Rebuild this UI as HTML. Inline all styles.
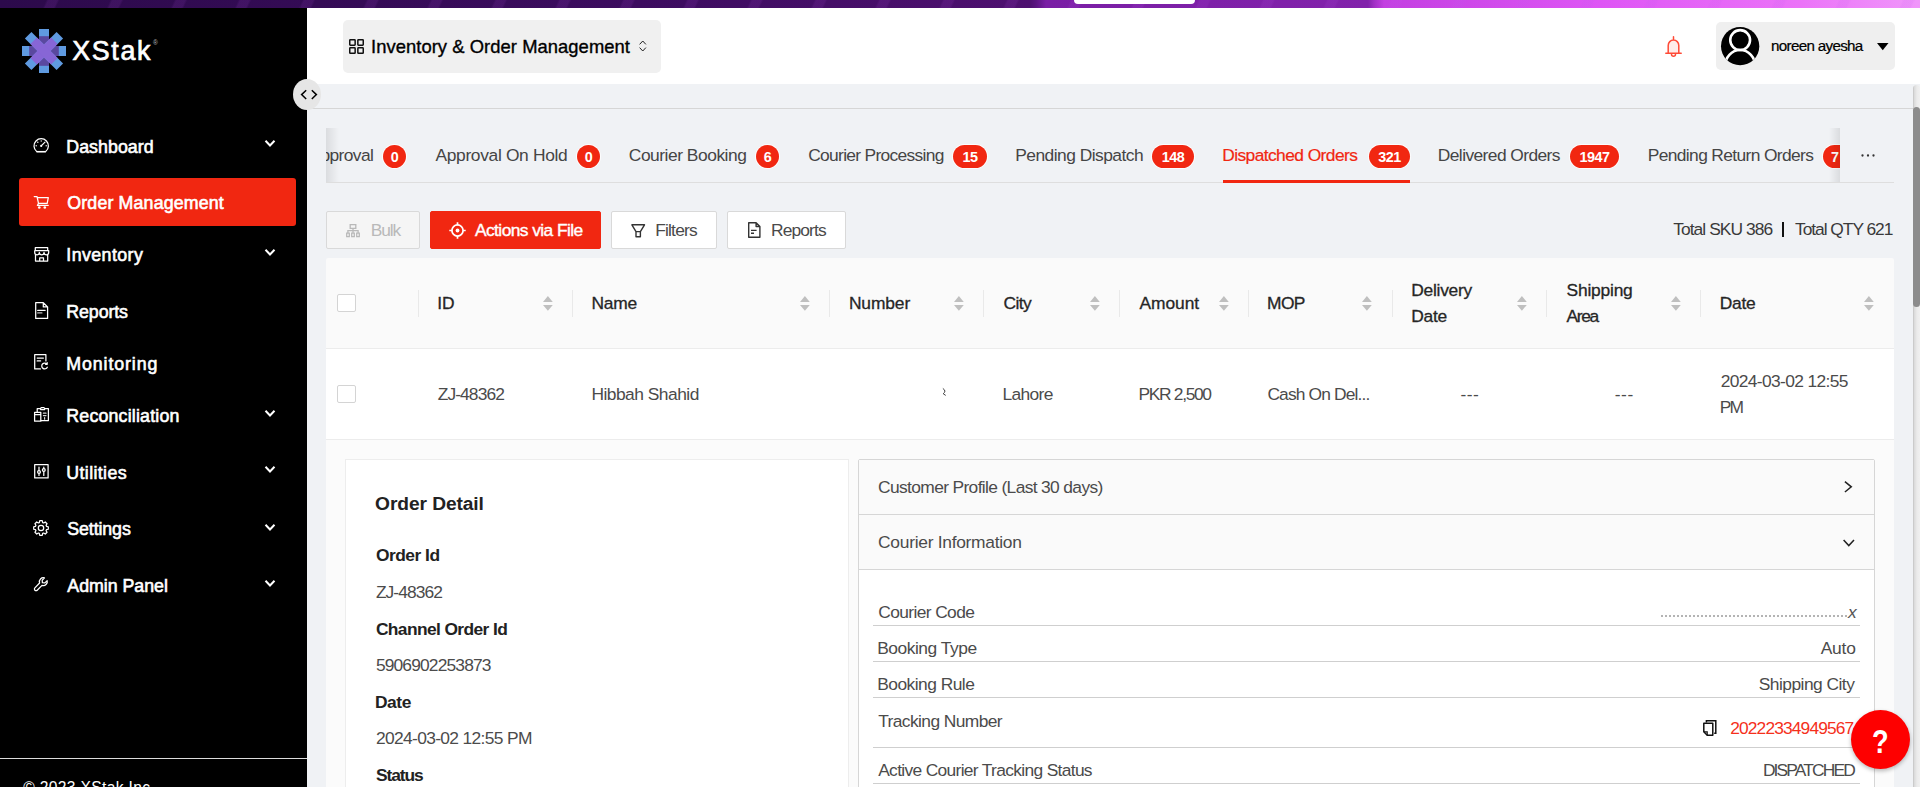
<!DOCTYPE html>
<html lang="en"><head><meta charset="utf-8"><title>XStak OMS - Dispatched Orders</title>
<style>
*{box-sizing:border-box;margin:0;padding:0}
html,body{width:1920px;height:787px;overflow:hidden;background:#f0f2f5;font-family:"Liberation Sans",sans-serif;color:#333}
body{position:relative}
.a,.t,svg.i{position:absolute}
.t{white-space:nowrap;line-height:20px;font-size:17.6px;z-index:2}
svg.i{overflow:visible;z-index:3}
#topband{left:0;top:0;width:1920px;height:8px;background:repeating-linear-gradient(115deg,rgba(190,90,235,0) 0 42px,rgba(190,90,235,.11) 44px 52px,rgba(190,90,235,0) 54px 58px),linear-gradient(90deg,#2c0a4b 0,#3c0c5f 640px,#4e1070 1030px,#5a1480 1036px,#7a1ea5 1046px,#8222ab 1368px,#a030c4 1374px,#c33fe1 1384px,#de55f5 1600px,#eb73f8 1800px,#f096fa 1920px)}
#pill{left:1074px;top:0;width:121px;height:4px;background:#fff;border-radius:0 0 8px 8px}
#side{left:0;top:8px;width:307px;height:779px;background:#000}
#sfoot{left:0;top:758px;width:307px;height:1px;background:#dcdcdc}
#active{left:19px;top:178px;width:277px;height:48px;background:#f12711;border-radius:3px}
#head{left:307px;top:8px;width:1613px;height:76px;background:#fff}
#modsel{left:343px;top:20px;width:318px;height:53px;background:#f0f0f0;border-radius:5px}
#userbox{left:1716px;top:22px;width:179px;height:48px;background:#efefef;border-radius:5px}
#toggle{left:293px;top:79px;width:28px;height:31px;border-radius:50%;background:#e6e6e6;z-index:4}
#hline{left:307px;top:108px;width:1606px;height:1px;background:#d6d6d6}
#sbtrack{left:1913px;top:85px;width:7px;height:702px;background:linear-gradient(90deg,#c2c2c2 0,#dcdcdc 1.5px,#ebebeb 4px,#f0f0f0 7px);border-radius:5px 5px 0 0;z-index:6}
#sbthumb{left:1913px;top:107px;width:7px;height:200px;background:#8c8c8c;border-radius:4px;z-index:7}
#tabline{left:326px;top:182px;width:1568px;height:1px;background:#dedede}
#tabink{left:1223px;top:180px;width:187px;height:3px;background:#f12711}
.maskL{left:307px;top:128px;width:19px;height:52px;background:#f0f2f5;z-index:5}
.maskR{left:1840px;top:128px;width:73px;height:52px;background:#f0f2f5;z-index:5}
.shL{left:326px;top:128px;width:13px;height:54px;background:linear-gradient(90deg,rgba(0,0,0,.09),rgba(0,0,0,0));z-index:5}
.shR{left:1829px;top:128px;width:11px;height:54px;background:linear-gradient(270deg,rgba(0,0,0,.09),rgba(0,0,0,0));z-index:5}
.badge{position:absolute;top:145px;height:23px;border-radius:12px;background:#f12711;box-shadow:0 0 0 1px rgba(255,255,255,.85);color:#fff;font-weight:700;font-size:14.4px;line-height:24.6px;text-align:center;z-index:2;letter-spacing:-.45px}
.btn{position:absolute;top:211px;height:38px;border:1px solid #d9d9d9;border-radius:2px;background:#fff}
#bBulk{left:326px;width:94px;background:#f5f5f5}
#bAct{left:430px;width:171px;background:#f12711;border-color:#f12711}
#bFil{left:611px;width:106px}
#bRep{left:727px;width:119px}
#bar{left:1781.6px;top:222px;width:2.6px;height:14.5px;background:#111}
#thead{left:326px;top:258px;width:1568px;height:90px;background:#fafafa;border-radius:2px 2px 0 0}
#thline{left:326px;top:348px;width:1568px;height:1px;background:#ececec}
#trow{left:326px;top:349px;width:1568px;height:90px;background:#fff}
#trline{left:326px;top:439px;width:1568px;height:1px;background:#ececec}
#texp{left:326px;top:440px;width:1568px;height:347px;background:#fbfbfb}
.sep{position:absolute;top:290px;width:1px;height:27px;background:#e9e9e9}
.cb{position:absolute;left:337px;width:19px;height:18px;border:1px solid #d4d4d4;border-radius:2px;background:#fff}
#card{left:345px;top:459px;width:504px;height:340px;background:#fff;border:1px solid #ededed}
#coll{left:858px;top:459px;width:1017px;height:340px;background:#fff;border:1px solid #d6d6d6;border-radius:2px}
#ch1{left:859px;top:460px;width:1015px;height:54px;background:#fafafa}
#cl1{left:859px;top:514px;width:1015px;height:1px;background:#d6d6d6}
#ch2{left:859px;top:515px;width:1015px;height:54px;background:#fafafa}
#cl2{left:859px;top:569px;width:1015px;height:1px;background:#d6d6d6}
.rl{position:absolute;left:873px;width:987px;height:1px;background:#cfcfcf}
#help{left:1851px;top:710px;width:59px;height:59px;border-radius:50%;background:#fe0000;box-shadow:0 2px 4px rgba(0,0,0,.28);z-index:8;color:#fff;font-weight:700;font-size:34px;line-height:62px;text-align:center}#help span{display:inline-block;transform:scaleX(.8)}
#redact{left:1661px;top:613px;width:186px;height:4px;border-bottom:2px dotted #b4b4b4;z-index:2}
</style></head><body>
<div class="a" id="topband"></div><div class="a" id="pill"></div>
<div class="a" id="side"></div><div class="a" id="sfoot"></div><div class="a" id="active"></div>
<div class="a" id="head"></div><div class="a" id="modsel"></div><div class="a" id="userbox"></div>
<div class="a" id="toggle"></div><div class="a" id="hline"></div>
<div class="a" id="sbtrack"></div><div class="a" id="sbthumb"></div>
<div class="a" id="tabline"></div><div class="a" id="tabink"></div>
<div class="a maskL"></div><div class="a maskR"></div><div class="a shL"></div><div class="a shR"></div>
<div class="badge" style="left:383px;width:23px">0</div>
<div class="badge" style="left:577px;width:23px">0</div>
<div class="badge" style="left:756px;width:23px">6</div>
<div class="badge" style="left:953px;width:34px">15</div>
<div class="badge" style="left:1152px;width:42px">148</div>
<div class="badge" style="left:1369px;width:41px">321</div>
<div class="badge" style="left:1570px;width:49px">1947</div>
<div class="badge" style="left:1823px;width:34px;text-align:left;padding-left:8px">7</div>
<div class="btn" id="bBulk"></div><div class="btn" id="bAct"></div><div class="btn" id="bFil"></div><div class="btn" id="bRep"></div>
<div class="a" id="bar"></div>
<div class="a" id="thead"></div><div class="a" id="thline"></div><div class="a" id="trow"></div><div class="a" id="trline"></div><div class="a" id="texp"></div>
<div class="sep" style="left:418px"></div><div class="sep" style="left:572px"></div><div class="sep" style="left:829px"></div>
<div class="sep" style="left:983px"></div><div class="sep" style="left:1119px"></div><div class="sep" style="left:1248px"></div>
<div class="sep" style="left:1392px"></div><div class="sep" style="left:1546px"></div><div class="sep" style="left:1700px"></div>
<div class="cb" style="top:294px"></div><div class="cb" style="top:384.5px"></div>
<div class="a" id="card"></div>
<div class="a" id="coll"></div><div class="a" id="ch1"></div><div class="a" id="cl1"></div><div class="a" id="ch2"></div><div class="a" id="cl2"></div>
<div class="rl" style="top:625px"></div><div class="rl" style="top:661px"></div><div class="rl" style="top:697px"></div><div class="rl" style="top:747px"></div><div class="rl" style="top:783px"></div>
<div class="a" id="redact"></div>
<div class="a" id="help"><span>?</span></div>
<svg class="i" style="left:22.00px;top:28.80px" width="44.00" height="44.00" viewBox="-22 -22 44 44"><rect x="-5" y="-22" width="10" height="44" fill="#5f9ae0"/><rect x="-22" y="-5" width="44" height="10" fill="#5f9ae0"/><rect x="-5" y="-14.8" width="10" height="29.6" fill="#5a489f"/><rect x="-14.8" y="-5" width="29.6" height="10" fill="#5a489f"/><g transform="rotate(45)"><rect x="-4.6" y="-22.4" width="9.2" height="44.8" fill="#5f9ae0"/><rect x="-22.4" y="-4.6" width="44.8" height="9.2" fill="#5f9ae0"/><rect x="-4.6" y="-14.6" width="9.2" height="29.2" fill="#8766d6"/><rect x="-14.6" y="-4.6" width="29.2" height="9.2" fill="#8766d6"/></g></svg>
<svg class="i" style="left:349.00px;top:38.50px" width="15.00" height="15.00" viewBox="0 0 15 15"><rect x="0.75" y="0.75" width="5.4" height="5.4" rx=".6" fill="none" stroke="#111" stroke-width="1.5"/><rect x="0.75" y="8.85" width="5.4" height="5.4" rx=".6" fill="none" stroke="#111" stroke-width="1.5"/><rect x="8.85" y="0.75" width="5.4" height="5.4" rx=".6" fill="none" stroke="#111" stroke-width="1.5"/><rect x="8.85" y="8.85" width="5.4" height="5.4" rx=".6" fill="none" stroke="#111" stroke-width="1.5"/></svg>
<svg class="i" style="left:638.80px;top:40.00px" width="7.50" height="12.00" viewBox="0 0 7.5 12"><path d="M.6 4.4 3.75 1 6.9 4.4M.6 7.6 3.75 11 6.9 7.6" fill="none" stroke="#222" stroke-width="1"/></svg>
<svg class="i" style="left:299.60px;top:88.70px;z-index:9" width="18.00" height="11.00" viewBox="0 0 18 11"><path d="M6.2 1.2 1.6 5.6 6.2 10M11.8 1.2 16.4 5.6 11.8 10" fill="none" stroke="#000" stroke-width="1.5"/></svg>
<svg class="i" style="left:1665.20px;top:36.00px" width="17.00" height="21.40" viewBox="0 0 17 21.4"><path d="M3.2 17V9.4a5.3 5.3 0 0 1 10.6 0V17z" fill="#ffece9"/><path d="M8.5 .7V3M3.2 17V9.4a5.3 5.3 0 0 1 10.6 0V17M.8 17.2h15.4M6.5 18.2a2 2 0 0 0 4 0" fill="none" stroke="#ff4a36" stroke-width="1.5" stroke-linecap="round"/></svg>
<svg class="i" style="left:1720.95px;top:26.85px" width="38.30" height="38.30" viewBox="-19.15 -19.15 38.3 38.3"><defs><clipPath id="avc"><circle cx="0" cy="0" r="19.15"/></clipPath></defs><circle cx="0" cy="0" r="19.15" fill="#000"/><g clip-path="url(#avc)" fill="none" stroke="#fff" stroke-width="2.6"><circle cx="0" cy="-6.1" r="9.9"/><ellipse cx="0" cy="20.5" rx="15.2" ry="16.6"/></g></svg>
<svg class="i" style="left:1876.50px;top:42.80px" width="11.50" height="7.30" viewBox="0 0 11.5 7.3"><path d="M0 0h11.5L5.75 7.3z" fill="#000"/></svg>
<svg class="i" style="left:264.60px;top:140.20px" width="10.00" height="6.80" viewBox="0 0 10 6.8"><path d="M.5 .8 5 5.5 9.5 .8" fill="none" stroke="#fff" stroke-width="2"/></svg>
<svg class="i" style="left:264.60px;top:249.20px" width="10.00" height="6.80" viewBox="0 0 10 6.8"><path d="M.5 .8 5 5.5 9.5 .8" fill="none" stroke="#fff" stroke-width="2"/></svg>
<svg class="i" style="left:264.60px;top:410.20px" width="10.00" height="6.80" viewBox="0 0 10 6.8"><path d="M.5 .8 5 5.5 9.5 .8" fill="none" stroke="#fff" stroke-width="2"/></svg>
<svg class="i" style="left:264.60px;top:466.20px" width="10.00" height="6.80" viewBox="0 0 10 6.8"><path d="M.5 .8 5 5.5 9.5 .8" fill="none" stroke="#fff" stroke-width="2"/></svg>
<svg class="i" style="left:264.60px;top:523.50px" width="10.00" height="6.80" viewBox="0 0 10 6.8"><path d="M.5 .8 5 5.5 9.5 .8" fill="none" stroke="#fff" stroke-width="2"/></svg>
<svg class="i" style="left:264.60px;top:580.40px" width="10.00" height="6.80" viewBox="0 0 10 6.8"><path d="M.5 .8 5 5.5 9.5 .8" fill="none" stroke="#fff" stroke-width="2"/></svg>
<svg class="i" style="left:33.00px;top:138.30px" width="16.60" height="14.70" viewBox="0 0 16.6 14.7"><path d="M3.55 13.4A7.2 7.2 0 1 1 12.85 13.4" fill="none" stroke="#fff" stroke-width="1.25" stroke-linejoin="round" stroke-linecap="round"/><path d="M3.5 13.75h9.4" fill="none" stroke="#fff" stroke-width="1.6"/><path d="M8.2 7.9 12 4.1" fill="none" stroke="#fff" stroke-width="1.25" stroke-linejoin="round" stroke-linecap="round"/><circle cx="8.2" cy="7.9" r="1.05" fill="#fff"/><g fill="#fff"><circle cx="3.2" cy="7.8" r=".7"/><circle cx="13.2" cy="7.8" r=".7"/><circle cx="8.2" cy="3" r=".7"/><circle cx="4.8" cy="4.3" r=".7"/></g></svg>
<svg class="i" style="left:34.00px;top:196.00px" width="14.60" height="13.00" viewBox="0 0 14.6 13"><path d="M.2 .5h2.8L4.5 7.4M3.3 1.6h11L13.2 7.4H4.5L3.4 9.5h10.8" fill="none" stroke="#fff" stroke-width="1.25" stroke-linejoin="round" stroke-linecap="round"/><circle cx="5.3" cy="11.5" r="1.3" fill="#fff"/><circle cx="10.8" cy="11.5" r="1.3" fill="#fff"/></svg>
<svg class="i" style="left:33.80px;top:247.00px" width="15.40" height="14.80" viewBox="0 0 15.4 14.8"><path d="M1.3 3.5V.7h12.4v2.8M.7 3.5h14v2a2.33 2.33 0 0 1-4.67 0 2.33 2.33 0 0 1-4.67 0A2.33 2.33 0 0 1 .7 5.5zM1.5 8.2v5.9h12.2V8.2M5.7 14.1v-3.3h3.8v3.3" fill="none" stroke="#fff" stroke-width="1.25" stroke-linejoin="round" stroke-linecap="round"/></svg>
<svg class="i" style="left:34.70px;top:301.90px" width="13.30" height="17.10" viewBox="0 0 13.3 17.1"><path d="M.7 .7h7.6l4.3 4.3v11.4H.7zM8.3 .7v4.3h4.3" fill="none" stroke="#fff" stroke-width="1.25" stroke-linejoin="round" stroke-linecap="round"/><path d="M2.7 8.4h7.4" fill="none" stroke="#fff" stroke-width="1.25" stroke-linejoin="round" stroke-linecap="round"/><path d="M2.7 10.9h4.2" fill="none" stroke="#fff" stroke-width="1.25" stroke-linejoin="round" stroke-linecap="round" opacity=".75"/></svg>
<svg class="i" style="left:34.40px;top:354.20px" width="14.00" height="15.80" viewBox="0 0 14 15.8"><path d="M6.4 14.9H.7V.7h11.2v6.2M3.2 4.1h6.2M3.2 6.9h3.4" fill="none" stroke="#fff" stroke-width="1.25" stroke-linejoin="round" stroke-linecap="round"/><path d="M12.9 10.1a2.9 2.9 0 1 0 .4 3.1M13.2 8.7v1.6h-1.6" fill="none" stroke="#fff" stroke-width="1.25" stroke-linejoin="round" stroke-linecap="round"/></svg>
<svg class="i" style="left:34.00px;top:407.00px" width="15.00" height="15.00" viewBox="0 0 15 15"><path d="M6.6 1.7H3.2v3.4M10.6 1.7h3.8v11.8H7.2M6.6 2.6V1.3l1-.8h2l1 .8v1.3z" fill="none" stroke="#fff" stroke-width="1.25" stroke-linejoin="round" stroke-linecap="round"/><path d="M.6 5.3h6.2v8.9H.6zM.6 7.5h6.2" fill="none" stroke="#fff" stroke-width="1.25" stroke-linejoin="round" stroke-linecap="round"/><path d="M9.4 6.2h2.6M9.4 8.6h2.6M10.6 10.6v1.6" fill="none" stroke="#fff" stroke-width="1.25" stroke-linejoin="round" stroke-linecap="round" opacity=".85"/></svg>
<svg class="i" style="left:33.80px;top:464.00px" width="14.80" height="14.60" viewBox="0 0 14.8 14.6"><path d="M.7 .7h13.4v13.2H.7z" fill="none" stroke="#fff" stroke-width="1.25" stroke-linejoin="round" stroke-linecap="round"/><path d="M5 3.2v3.4M5 9.6v1.8M9.8 3.2v1.4M9.8 7.6v3.8" fill="none" stroke="#fff" stroke-width="1.25" stroke-linejoin="round" stroke-linecap="round"/><circle cx="5" cy="8.1" r="1.4" fill="none" stroke="#fff" stroke-width="1.25" stroke-linejoin="round" stroke-linecap="round"/><circle cx="9.8" cy="6.1" r="1.4" fill="none" stroke="#fff" stroke-width="1.25" stroke-linejoin="round" stroke-linecap="round"/></svg>
<svg class="i" style="left:33.00px;top:520.20px" width="16.00" height="16.00" viewBox="0 0 16 16"><path d="M6.32 2.55L6.75 0.71L9.25 0.71L9.68 2.55L10.66 2.96L12.27 1.96L14.04 3.73L13.04 5.34L13.45 6.32L15.29 6.75L15.29 9.25L13.45 9.68L13.04 10.66L14.04 12.27L12.27 14.04L10.66 13.04L9.68 13.45L9.25 15.29L6.75 15.29L6.32 13.45L5.34 13.04L3.73 14.04L1.96 12.27L2.96 10.66L2.55 9.68L0.71 9.25L0.71 6.75L2.55 6.32L2.96 5.34L1.96 3.73L3.73 1.96L5.34 2.96Z" fill="none" stroke="#fff" stroke-width="1.25" stroke-linejoin="round" stroke-linecap="round"/><circle cx="8" cy="8" r="2.7" fill="none" stroke="#fff" stroke-width="1.25" stroke-linejoin="round" stroke-linecap="round"/></svg>
<svg class="i" style="left:34.40px;top:577.20px" width="14.20" height="14.20" viewBox="0 0 14.2 14.2"><path d="M13.2 3.6 10.9 5.9 8.4 5.6 8.2 3.2 10.5.9A4 4 0 0 0 5.6 6L.9 10.9a1.6 1.6 0 0 0 2.3 2.3L8 8.4a4 4 0 0 0 5.2-4.8z" fill="none" stroke="#fff" stroke-width="1.25" stroke-linejoin="round" stroke-linecap="round"/></svg>
<svg class="i" style="left:346.00px;top:223.70px" width="14.00" height="13.30" viewBox="0 0 14 13.3"><path d="M4.2 .7h5.6v3.6H4.2zM7 4.3v2.3M1.9 9V6.6h10.2V9M7 6.6V9M.7 9.2h2.6v3.4H.7zM5.7 9.2h2.6v3.4H5.7zM10.7 9.2h2.6v3.4h-2.6z" fill="none" stroke="#b9b9b9" stroke-width="1.3"/></svg>
<svg class="i" style="left:448.50px;top:221.50px" width="17.00" height="17.00" viewBox="0 0 17 17"><circle cx="8.5" cy="8.5" r="5.6" fill="none" stroke="#fff" stroke-width="1.7"/><circle cx="8.5" cy="8.5" r="1.9" fill="#fff"/><path d="M8.5 .3v3M8.5 13.7v3M.3 8.5h3M13.7 8.5h3" stroke="#fff" stroke-width="1.7"/></svg>
<svg class="i" style="left:630.70px;top:223.60px" width="14.40" height="13.60" viewBox="0 0 14.4 13.6"><path d="M.9 .8h12.6L9.4 7.6H5zM5 7.6v5.2h4.4V7.6" fill="none" stroke="#333" stroke-width="1.4" stroke-linejoin="round"/></svg>
<svg class="i" style="left:748.00px;top:222.00px" width="12.60" height="16.00" viewBox="0 0 12.6 16"><path d="M.7 .7h7.4l3.8 3.8v10.8H.7zM8.1 .7v3.8h3.8" fill="none" stroke="#333" stroke-width="1.4" stroke-linejoin="round"/><path d="M3 8.4h5.6M3 11.2h3" fill="none" stroke="#333" stroke-width="1.4" stroke-linejoin="round"/></svg>
<svg class="i" style="left:1860.50px;top:153.80px;z-index:9" width="14.00" height="3.00" viewBox="0 0 14 3"><circle cx="1.5" cy="1.5" r="1.15" fill="#333"/><circle cx="7" cy="1.5" r="1.15" fill="#333"/><circle cx="12.5" cy="1.5" r="1.15" fill="#333"/></svg>
<svg class="i" style="left:942.00px;top:387.60px" width="5.00" height="9.00" viewBox="0 0 5 9"><path d="M1.2 .7q3.6 2.4 0 5l2.2 1.5" fill="none" stroke="#2a2a2a" stroke-width="1" stroke-linecap="round" opacity=".9"/></svg>
<svg class="i" style="left:542.50px;top:295.70px" width="9.80" height="14.80" viewBox="0 0 9.8 14.8"><path d="M4.9 0 9.8 5.9H0zM4.9 14.8 9.8 8.9H0z" fill="#bfbfbf"/></svg>
<svg class="i" style="left:799.50px;top:295.70px" width="9.80" height="14.80" viewBox="0 0 9.8 14.8"><path d="M4.9 0 9.8 5.9H0zM4.9 14.8 9.8 8.9H0z" fill="#bfbfbf"/></svg>
<svg class="i" style="left:953.70px;top:295.70px" width="9.80" height="14.80" viewBox="0 0 9.8 14.8"><path d="M4.9 0 9.8 5.9H0zM4.9 14.8 9.8 8.9H0z" fill="#bfbfbf"/></svg>
<svg class="i" style="left:1089.70px;top:295.70px" width="9.80" height="14.80" viewBox="0 0 9.8 14.8"><path d="M4.9 0 9.8 5.9H0zM4.9 14.8 9.8 8.9H0z" fill="#bfbfbf"/></svg>
<svg class="i" style="left:1218.60px;top:295.70px" width="9.80" height="14.80" viewBox="0 0 9.8 14.8"><path d="M4.9 0 9.8 5.9H0zM4.9 14.8 9.8 8.9H0z" fill="#bfbfbf"/></svg>
<svg class="i" style="left:1362.40px;top:295.70px" width="9.80" height="14.80" viewBox="0 0 9.8 14.8"><path d="M4.9 0 9.8 5.9H0zM4.9 14.8 9.8 8.9H0z" fill="#bfbfbf"/></svg>
<svg class="i" style="left:1516.70px;top:295.70px" width="9.80" height="14.80" viewBox="0 0 9.8 14.8"><path d="M4.9 0 9.8 5.9H0zM4.9 14.8 9.8 8.9H0z" fill="#bfbfbf"/></svg>
<svg class="i" style="left:1670.70px;top:295.70px" width="9.80" height="14.80" viewBox="0 0 9.8 14.8"><path d="M4.9 0 9.8 5.9H0zM4.9 14.8 9.8 8.9H0z" fill="#bfbfbf"/></svg>
<svg class="i" style="left:1863.50px;top:295.70px" width="9.80" height="14.80" viewBox="0 0 9.8 14.8"><path d="M4.9 0 9.8 5.9H0zM4.9 14.8 9.8 8.9H0z" fill="#bfbfbf"/></svg>
<svg class="i" style="left:1844.00px;top:481.40px" width="8.40" height="11.60" viewBox="0 0 8.4 11.6"><path d="M.9 .6 7.3 5.8.9 11" fill="none" stroke="#222" stroke-width="1.5"/></svg>
<svg class="i" style="left:1842.50px;top:538.60px" width="11.60" height="7.60" viewBox="0 0 11.6 7.6"><path d="M.6 .9 5.8 6.6 11 .9" fill="none" stroke="#222" stroke-width="1.5"/></svg>
<svg class="i" style="left:1702.60px;top:720.00px" width="13.60" height="16.00" viewBox="0 0 13.6 16"><path d="M3.4 2.6V.8h9.4v12.4h-1.6" fill="none" stroke="#111" stroke-width="1.5"/><path d="M.8 3.2h9v12H4.2L.8 11.8z" fill="none" stroke="#111" stroke-width="1.5" stroke-linejoin="round"/><path d="M.8 11.8h3.4v3.4" fill="none" stroke="#111" stroke-width="1.2"/></svg>

<span class="t" style="left:371.00px;top:36px;line-height:21px;font-size:18.40px;color:#000;letter-spacing:0.049px;-webkit-text-stroke:.35px #000">Inventory &amp; Order Management</span>
<span class="t" style="left:1771.00px;top:37px;line-height:17px;font-size:15.20px;color:#000;letter-spacing:-0.686px;-webkit-text-stroke:.2px #000">noreen ayesha</span>
<span class="t" style="left:72.30px;top:36px;line-height:30px;font-size:26.80px;color:#fff;letter-spacing:1.651px;-webkit-text-stroke:.7px #fff">XStak</span>
<span class="t" style="left:153.00px;top:39px;line-height:7px;font-size:6.50px;color:#bbb;letter-spacing:0.000px;">®</span>
<span class="t" style="left:66.30px;top:137px;line-height:20px;font-size:17.80px;color:#fff;letter-spacing:0.038px;-webkit-text-stroke:.6px #fff">Dashboard</span>
<span class="t" style="left:67.30px;top:193px;line-height:20px;font-size:17.80px;color:#fff;letter-spacing:0.151px;-webkit-text-stroke:.6px #fff">Order Management</span>
<span class="t" style="left:66.30px;top:245px;line-height:20px;font-size:17.80px;color:#fff;letter-spacing:0.419px;-webkit-text-stroke:.6px #fff">Inventory</span>
<span class="t" style="left:66.30px;top:302px;line-height:20px;font-size:17.80px;color:#fff;letter-spacing:-0.095px;-webkit-text-stroke:.6px #fff">Reports</span>
<span class="t" style="left:66.30px;top:354px;line-height:20px;font-size:17.80px;color:#fff;letter-spacing:0.897px;-webkit-text-stroke:.6px #fff">Monitoring</span>
<span class="t" style="left:66.30px;top:406px;line-height:20px;font-size:17.80px;color:#fff;letter-spacing:0.184px;-webkit-text-stroke:.6px #fff">Reconciliation</span>
<span class="t" style="left:66.30px;top:463px;line-height:20px;font-size:17.80px;color:#fff;letter-spacing:0.373px;-webkit-text-stroke:.6px #fff">Utilities</span>
<span class="t" style="left:67.30px;top:519px;line-height:20px;font-size:17.80px;color:#fff;letter-spacing:-0.108px;-webkit-text-stroke:.6px #fff">Settings</span>
<span class="t" style="left:67.30px;top:576px;line-height:20px;font-size:17.80px;color:#fff;letter-spacing:-0.027px;-webkit-text-stroke:.6px #fff">Admin Panel</span>
<span class="t" style="left:23.30px;top:779px;line-height:17px;font-size:15.60px;color:#fff;letter-spacing:0.339px;">© 2023 XStak Inc.</span>
<span class="t" style="left:309.50px;top:145px;line-height:20px;font-size:17.40px;color:#454545;letter-spacing:-0.610px;">Approval</span>
<span class="t" style="left:435.50px;top:145px;line-height:20px;font-size:17.40px;color:#454545;letter-spacing:-0.340px;">Approval On Hold</span>
<span class="t" style="left:628.80px;top:145px;line-height:20px;font-size:17.40px;color:#454545;letter-spacing:-0.473px;">Courier Booking</span>
<span class="t" style="left:808.20px;top:145px;line-height:20px;font-size:17.40px;color:#454545;letter-spacing:-0.683px;">Courier Processing</span>
<span class="t" style="left:1015.20px;top:145px;line-height:20px;font-size:17.40px;color:#454545;letter-spacing:-0.523px;">Pending Dispatch</span>
<span class="t" style="left:1222.20px;top:145px;line-height:20px;font-size:17.40px;color:#f12711;letter-spacing:-0.581px;-webkit-text-stroke:.2px #f12711">Dispatched Orders</span>
<span class="t" style="left:1437.80px;top:145px;line-height:20px;font-size:17.40px;color:#454545;letter-spacing:-0.583px;">Delivered Orders</span>
<span class="t" style="left:1647.80px;top:145px;line-height:20px;font-size:17.40px;color:#454545;letter-spacing:-0.637px;">Pending Return Orders</span>
<span class="t" style="left:370.80px;top:220px;line-height:20px;font-size:17.40px;color:#b9b9b9;letter-spacing:-1.145px;">Bulk</span>
<span class="t" style="left:475.00px;top:220px;line-height:20px;font-size:17.40px;color:#fff;letter-spacing:-0.585px;-webkit-text-stroke:.4px #fff">Actions via File</span>
<span class="t" style="left:655.20px;top:220px;line-height:20px;font-size:17.40px;color:#4a4a4a;letter-spacing:-0.807px;">Filters</span>
<span class="t" style="left:771.00px;top:220px;line-height:20px;font-size:17.40px;color:#4a4a4a;letter-spacing:-0.866px;">Reports</span>
<span class="t" style="left:1673.20px;top:219px;line-height:20px;font-size:17.40px;color:#3a3a3a;letter-spacing:-0.933px;">Total SKU 386</span>
<span class="t" style="left:1795.00px;top:219px;line-height:20px;font-size:17.40px;color:#3a3a3a;letter-spacing:-1.041px;">Total QTY 621</span>
<span class="t" style="left:437.20px;top:293px;line-height:20px;font-size:17.40px;color:#262626;letter-spacing:-0.032px;-webkit-text-stroke:.3px #262626">ID</span>
<span class="t" style="left:591.40px;top:293px;line-height:20px;font-size:17.40px;color:#262626;letter-spacing:-0.239px;-webkit-text-stroke:.3px #262626">Name</span>
<span class="t" style="left:848.90px;top:293px;line-height:20px;font-size:17.40px;color:#262626;letter-spacing:-0.112px;-webkit-text-stroke:.3px #262626">Number</span>
<span class="t" style="left:1003.60px;top:293px;line-height:20px;font-size:17.40px;color:#262626;letter-spacing:-0.618px;-webkit-text-stroke:.3px #262626">City</span>
<span class="t" style="left:1139.60px;top:293px;line-height:20px;font-size:17.40px;color:#262626;letter-spacing:-0.080px;-webkit-text-stroke:.3px #262626">Amount</span>
<span class="t" style="left:1267.00px;top:293px;line-height:20px;font-size:17.40px;color:#262626;letter-spacing:-0.607px;-webkit-text-stroke:.3px #262626">MOP</span>
<span class="t" style="left:1411.30px;top:280px;line-height:20px;font-size:17.40px;color:#262626;letter-spacing:-0.274px;-webkit-text-stroke:.3px #262626">Delivery</span>
<span class="t" style="left:1411.30px;top:306px;line-height:20px;font-size:17.40px;color:#262626;letter-spacing:-0.321px;-webkit-text-stroke:.3px #262626">Date</span>
<span class="t" style="left:1566.60px;top:280px;line-height:20px;font-size:17.40px;color:#262626;letter-spacing:-0.216px;-webkit-text-stroke:.3px #262626">Shipping</span>
<span class="t" style="left:1566.60px;top:306px;line-height:20px;font-size:17.40px;color:#262626;letter-spacing:-1.354px;-webkit-text-stroke:.3px #262626">Area</span>
<span class="t" style="left:1719.70px;top:293px;line-height:20px;font-size:17.40px;color:#262626;letter-spacing:-0.254px;-webkit-text-stroke:.3px #262626">Date</span>
<span class="t" style="left:437.70px;top:384px;line-height:20px;font-size:17.40px;color:#4b4b4b;letter-spacing:-0.900px;">ZJ-48362</span>
<span class="t" style="left:591.40px;top:384px;line-height:20px;font-size:17.40px;color:#4b4b4b;letter-spacing:-0.510px;">Hibbah Shahid</span>
<span class="t" style="left:1002.60px;top:384px;line-height:20px;font-size:17.40px;color:#4b4b4b;letter-spacing:-0.676px;">Lahore</span>
<span class="t" style="left:1138.60px;top:384px;line-height:20px;font-size:17.40px;color:#4b4b4b;letter-spacing:-1.342px;">PKR 2,500</span>
<span class="t" style="left:1267.40px;top:384px;line-height:20px;font-size:17.40px;color:#4b4b4b;letter-spacing:-0.848px;">Cash On Del...</span>
<span class="t" style="left:1460.60px;top:384px;line-height:20px;font-size:17.40px;color:#4b4b4b;letter-spacing:0.459px;">---</span>
<span class="t" style="left:1614.80px;top:384px;line-height:20px;font-size:17.40px;color:#4b4b4b;letter-spacing:0.509px;">---</span>
<span class="t" style="left:1720.70px;top:371px;line-height:20px;font-size:17.40px;color:#4b4b4b;letter-spacing:-0.636px;">2024-03-02 12:55</span>
<span class="t" style="left:1719.70px;top:397px;line-height:20px;font-size:17.40px;color:#4b4b4b;letter-spacing:-1.699px;">PM</span>
<span class="t" style="left:375.10px;top:493px;line-height:21px;font-size:19.20px;font-weight:700;color:#222;letter-spacing:-0.091px;">Order Detail</span>
<span class="t" style="left:375.90px;top:545px;line-height:20px;font-size:17.40px;font-weight:700;color:#222;letter-spacing:-0.503px;">Order Id</span>
<span class="t" style="left:375.90px;top:582px;line-height:20px;font-size:17.40px;color:#4b4b4b;letter-spacing:-0.928px;">ZJ-48362</span>
<span class="t" style="left:375.90px;top:619px;line-height:20px;font-size:17.40px;font-weight:700;color:#222;letter-spacing:-0.610px;">Channel Order Id</span>
<span class="t" style="left:375.90px;top:655px;line-height:20px;font-size:17.40px;color:#4b4b4b;letter-spacing:-0.847px;">5906902253873</span>
<span class="t" style="left:374.90px;top:692px;line-height:20px;font-size:17.40px;font-weight:700;color:#222;letter-spacing:-0.374px;">Date</span>
<span class="t" style="left:375.90px;top:728px;line-height:20px;font-size:17.40px;color:#4b4b4b;letter-spacing:-0.647px;">2024-03-02 12:55 PM</span>
<span class="t" style="left:375.90px;top:765px;line-height:20px;font-size:17.40px;font-weight:700;color:#222;letter-spacing:-1.075px;">Status</span>
<span class="t" style="left:878.10px;top:477px;line-height:20px;font-size:17.40px;color:#4b4b4b;letter-spacing:-0.645px;">Customer Profile (Last 30 days)</span>
<span class="t" style="left:878.10px;top:532px;line-height:20px;font-size:17.40px;color:#4b4b4b;letter-spacing:-0.282px;">Courier Information</span>
<span class="t" style="left:878.20px;top:602px;line-height:20px;font-size:17.40px;color:#4b4b4b;letter-spacing:-0.614px;">Courier Code</span>
<span class="t" style="left:877.20px;top:638px;line-height:20px;font-size:17.40px;color:#4b4b4b;letter-spacing:-0.464px;">Booking Type</span>
<span class="t" style="left:877.20px;top:674px;line-height:20px;font-size:17.40px;color:#4b4b4b;letter-spacing:-0.525px;">Booking Rule</span>
<span class="t" style="left:878.20px;top:711px;line-height:20px;font-size:17.40px;color:#4b4b4b;letter-spacing:-0.595px;">Tracking Number</span>
<span class="t" style="left:878.20px;top:760px;line-height:20px;font-size:17.40px;color:#4b4b4b;letter-spacing:-0.673px;">Active Courier Tracking Status</span>
<span class="t" style="left:1848.00px;top:602px;line-height:20px;font-size:17.40px;color:#555;letter-spacing:0.000px;font-style:italic">x</span>
<span class="t" style="left:1820.70px;top:638px;line-height:20px;font-size:17.40px;color:#4b4b4b;letter-spacing:-0.201px;">Auto</span>
<span class="t" style="left:1758.70px;top:674px;line-height:20px;font-size:17.40px;color:#4b4b4b;letter-spacing:-0.523px;">Shipping City</span>
<span class="t" style="left:1730.20px;top:718px;line-height:20px;font-size:17.40px;color:#f5301c;letter-spacing:-0.872px;">20222334949567</span>
<span class="t" style="left:1762.90px;top:760px;line-height:20px;font-size:17.40px;color:#4b4b4b;letter-spacing:-1.850px;">DISPATCHED</span>
</body></html>
